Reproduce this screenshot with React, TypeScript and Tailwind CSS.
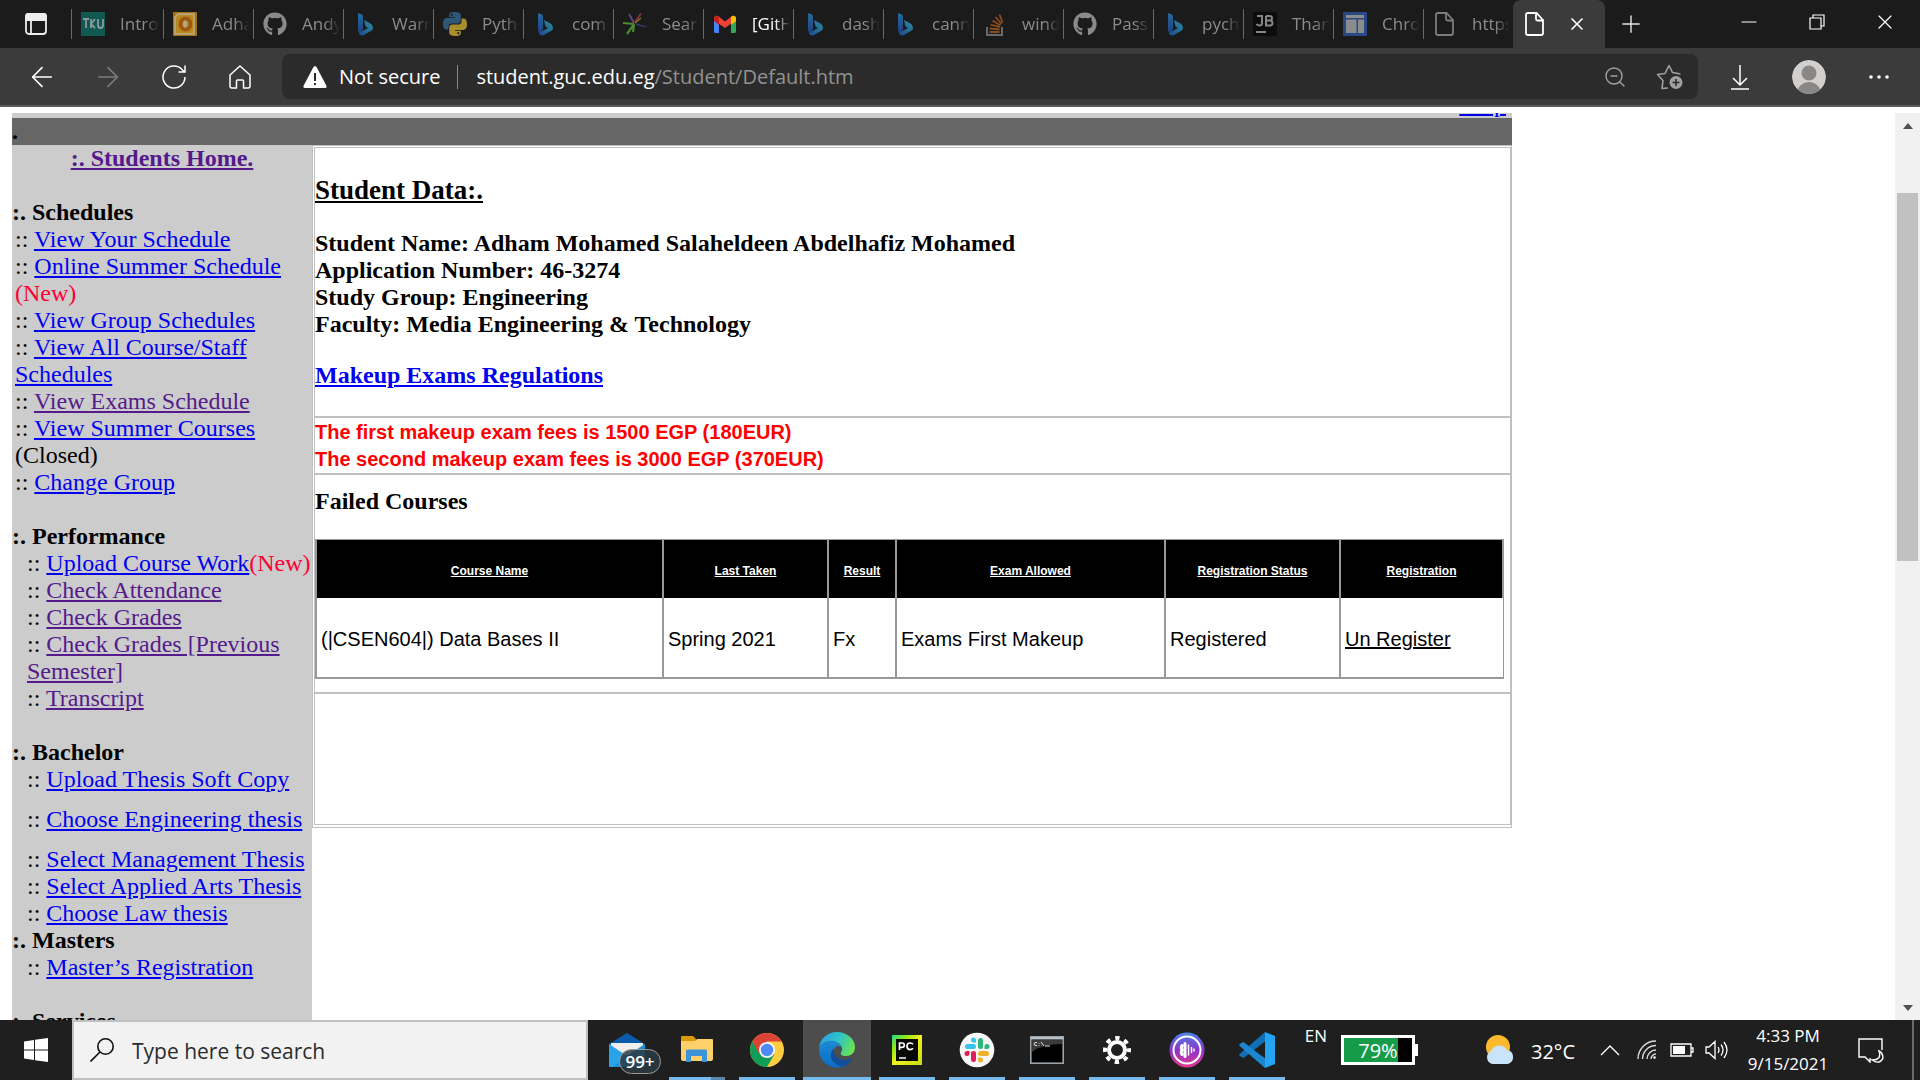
import React from "react";
import {
  ArrowLeft,
  ArrowRight,
  ZoomOut,
  Minus,
  X,
  Plus,
} from "lucide-react";
import { FaGithub } from "react-icons/fa";

/* ---------- tab icons ---------- */

const TkuIcon = () => (
  <svg viewBox="0 0 24 24" className="size-6" aria-hidden="true">
    <rect width="24" height="24" fill="#0f5952" />
    <path d="M2 7h6M5 7v9M10 7v9M10 12l4-5M10 12l4 4M17 7v6q0 3 2.500 3t2.500-3V7" fill="none" stroke="#8b9a98" strokeWidth="1.800" />
  </svg>
);

const OutlookIcon = () => (
  <svg viewBox="0 0 24 24" className="size-6" aria-hidden="true">
    <rect width="24" height="24" fill="#a5701a" />
    <path d="M2 5l3-3h16v20H2z" fill="#b98a24" stroke="#b9ac8c" strokeWidth="1.500" />
    <ellipse cx="12.500" cy="12" rx="5" ry="5.500" fill="none" stroke="#9b5a10" strokeWidth="4" />
    <ellipse cx="12" cy="12" rx="2" ry="3.500" fill="#b8a789" />
  </svg>
);

const GithubIcon = () => <FaGithub className="size-6 text-[#8a8a8a]" aria-hidden="true" />;

const BingIcon = () => (
  <svg viewBox="0 0 24 24" className="size-6" aria-hidden="true">
    <defs>
      <linearGradient id="bingA" x1="0" y1="0" x2="0" y2="1">
        <stop offset="0" stopColor="#256b9a" />
        <stop offset="1" stopColor="#1d3f86" />
      </linearGradient>
      <linearGradient id="bingB" x1="0" y1="1" x2="1" y2="0">
        <stop offset="0" stopColor="#1c4a92" />
        <stop offset="1" stopColor="#2c8d9c" />
      </linearGradient>
    </defs>
    <path d="M5 1l4 1.500q1 .5 1 1.500v13l-3 4.500Q5 20 5 18z" fill="url(#bingA)" />
    <path d="M11 8l6.500 3.500q3.500 2.500 2 6.500L10 23.500q-3 .5-4.300-2.500L15 16l-2.500-1.500z" fill="url(#bingB)" />
  </svg>
);

const PythonIcon = () => {
  const half =
    "M11.900 0C5.800 0 6.200 2.600 6.200 2.600v2.700h5.800v.8H3.900S0 5.700 0 11.800s3.400 5.800 3.400 5.800h2v-2.800s-.1-3.400 3.400-3.400h5.700s3.300.05 3.300-3.200V3.200S18.200 0 11.900 0zM8.700 1.800a1 1 0 110 2.100 1 1 0 010-2.100z";
  return (
    <svg viewBox="0 0 24 24" className="size-6" aria-hidden="true">
      <path d={half} fill="#2f5878" fillRule="evenodd" />
      <path d={half} fill="#a88f2c" fillRule="evenodd" transform="rotate(180 12 12)" />
    </svg>
  );
};

const BurstIcon = () => (
  <svg viewBox="0 0 24 24" className="size-6" aria-hidden="true" fill="none" strokeWidth="1.800">
    <path d="M11 11L6 2" stroke="#5d4a86" />
    <path d="M12 10L18 1.500" stroke="#8d3434" />
    <path d="M13 12l10 3" stroke="#333a5e" />
    <path d="M0 11l11 1M11 12L4 22M11 12l-1 8" stroke="#4c8a2d" strokeWidth="2.200" />
    <path d="M12 11l6-5" stroke="#8c7b2b" strokeWidth="1.200" />
  </svg>
);

const GmailIcon = () => (
  <svg viewBox="0 0 24 24" className="size-6" aria-hidden="true">
    <path d="M1 6l5 4v11H2.500Q1 21 1 19.500z" fill="#4285f4" />
    <path d="M18 10l5-4v13.500q0 1.500-1.500 1.500H18z" fill="#34a853" />
    <path d="M1 6q.5-3 4-2l7 5.500L19 4q3.500-1 4 2v2L12 16 1 8.500z" fill="#ea4335" />
    <path d="M18 5l1-1q3.500-1 4 2v3l-5 4z" fill="#fbbc04" />
    <path d="M1 6q.5-3 4-2l1 1v8L1 9z" fill="#c5221f" />
  </svg>
);

const StackIcon = () => (
  <svg viewBox="0 0 24 24" className="size-6" aria-hidden="true" fill="none">
    <path d="M4 15v8h15v-8" stroke="#6a6a6a" strokeWidth="2" />
    <path d="M6.500 20h10M6.800 16.500l9.800 1M7.500 12.500l9.300 2.700M9.500 8.500l8 5M12.500 5l6 7M16.500 2.500l3 8" stroke="#8a4c1e" strokeWidth="1.800" />
  </svg>
);

const JbIcon = () => (
  <svg viewBox="0 0 24 24" className="size-6" aria-hidden="true">
    <rect width="24" height="24" fill="#0c0c0c" />
    <path d="M4 4h5v7q0 2.500-2.500 2.500-2 0-3-1.500M13 4v9.500h3.500q3 0 3-2.500T16.500 8.600H13M13 4h3.500q2.500 0 2.500 2.300t-2.500 2.300M3 20h10" fill="none" stroke="#858585" strokeWidth="2" />
  </svg>
);

const LayoutIcon = () => (
  <svg viewBox="0 0 24 24" className="size-6" aria-hidden="true">
    <rect width="24" height="24" rx="1" fill="#274a85" />
    <path d="M3 3h18v3H3zM3 7.500h10.500V21H3zM15 7.500h6V21h-6z" fill="#8c8c8c" />
  </svg>
);

const PageIcon = ({ tone }: { tone: string }) => (
  <svg viewBox="0 0 24 24" className={`size-6 ${tone}`} aria-hidden="true" fill="none" stroke="currentColor" strokeWidth="1.800">
    <path d="M5 1h8.500L20 8v13q0 2-2 2H5q-2 0-2-2V3q0-2 2-2zM13 1v6q0 1.500 1.500 1.500H20" />
  </svg>
);

const tabs: { label: string; icon: React.ReactNode; bright?: boolean }[] = [
  { label: "Intro", icon: <TkuIcon /> },
  { label: "Adha", icon: <OutlookIcon /> },
  { label: "Andy", icon: <GithubIcon /> },
  { label: "Warn", icon: <BingIcon /> },
  { label: "Pyth", icon: <PythonIcon /> },
  { label: "com", icon: <BingIcon /> },
  { label: "Sear", icon: <BurstIcon /> },
  { label: "[GitH", icon: <GmailIcon />, bright: true },
  { label: "dash", icon: <BingIcon /> },
  { label: "cann", icon: <BingIcon /> },
  { label: "wind", icon: <StackIcon /> },
  { label: "Pass", icon: <GithubIcon /> },
  { label: "pych", icon: <BingIcon /> },
  { label: "Than", icon: <JbIcon /> },
  { label: "Chro", icon: <LayoutIcon /> },
  { label: "https", icon: <PageIcon tone="text-[#7c7c7c]" /> },
];

function TabStrip() {
  return (
    <div className="flex h-12 shrink-0 bg-[#1b1b1b]">
      <button aria-label="Tab actions" className="flex w-[71px] items-center justify-center">
        <svg viewBox="0 0 24 24" className="size-6" fill="none" stroke="#ededed" strokeWidth="1.800">
          <rect x="2" y="2" width="20" height="20" rx="3" />
          <path d="M2 4q0-2 2-2h16q2 0 2 2v4H2z" fill="#ededed" />
          <path d="M7 8v14" />
        </svg>
      </button>
      <div className="flex">
        {tabs.map((t, i) => (
          <button key={i} className="flex h-12 w-[90px] shrink-0 items-center first:w-[92px]">
            <span className="h-[30px] w-px bg-[#6a6a6a]" />
            <span className="ml-[9px] shrink-0">{t.icon}</span>
            <span
              className={
                "mr-[3px] ml-[15px] flex-1 overflow-hidden text-left text-[17px] whitespace-nowrap [mask-image:linear-gradient(to_right,black_60%,transparent)] " +
                (t.bright ? "text-white" : "text-[#8c8c8c]")
              }
            >
              {t.label}
            </span>
          </button>
        ))}
      </div>
      <div className="flex w-[92px] shrink-0 items-center rounded-t-lg bg-[#3b3b3b] pl-[10px]">
        <PageIcon tone="text-white" />
        <button aria-label="Close tab" className="ml-[20px] text-white">
          <X className="size-5" strokeWidth={2} />
        </button>
      </div>
      <button aria-label="New tab" className="ml-3 text-[#e6e6e6]">
        <Plus className="size-7" strokeWidth={1.200} />
      </button>
      <div className="mr-px ml-auto flex w-[204px] text-white">
        <button aria-label="Minimize" className="flex w-[68px] items-center justify-center pb-1">
          <Minus className="size-6" strokeWidth={1.200} />
        </button>
        <button aria-label="Restore" className="flex w-[68px] items-center justify-center pb-1">
          <svg viewBox="0 0 16 16" className="size-4" fill="none" stroke="white" strokeWidth="1.200">
            <path d="M1 4h11v11H1zM4 4V1h11v11h-3" />
          </svg>
        </button>
        <button aria-label="Close" className="flex w-[68px] items-center justify-center pb-1">
          <X className="size-6" strokeWidth={1.200} />
        </button>
      </div>
    </div>
  );
}

function Toolbar() {
  return (
    <div className="flex h-[59px] shrink-0 items-center border-b-2 border-[#5a5a5a] bg-[#3b3b3b] text-white">
      <button aria-label="Back" className="ml-[26px]">
        <ArrowLeft className="size-8" strokeWidth={1.200} />
      </button>
      <button aria-label="Forward" className="ml-[34px] text-[#7d7d7d]">
        <ArrowRight className="size-8" strokeWidth={1.200} />
      </button>
      <button aria-label="Refresh" className="ml-[38px]">
        <svg viewBox="0 0 24 24" className="size-6" fill="none" stroke="currentColor" strokeWidth="1.500">
          <path d="M23 12A11 11 0 1 1 20 4.500L22.500 7M23 .5V7h-6.500" />
        </svg>
      </button>
      <button aria-label="Home" className="ml-[42px]">
        <svg viewBox="0 0 24 24" className="size-6" fill="none" stroke="currentColor" strokeWidth="1.500" strokeLinejoin="round">
          <path d="M2 10L12 1l10 9v11q0 2-2 2h-4.500v-7q0-1-1-1h-5q-1 0-1 1v7H4q-2 0-2-2z" />
        </svg>
      </button>
      <div className="ml-[30px] flex h-[45px] flex-1 items-center rounded-lg bg-[#2b2b2b] pl-[21px] text-xl">
        <button className="flex items-center">
          <svg viewBox="0 0 24 24" className="size-6" fill="white">
            <path fillRule="evenodd" d="M12 1q1 0 1.800 1.500l9.500 18q1 2.500-1.300 2.500H2Q-.3 23 .7 20.500l9.500-18Q11 1 12 1zM11 8v8h2V8zM11 18v2h2v-2z" />
          </svg>
          <span className="ml-3">Not secure</span>
        </button>
        <span className="ml-[17px] h-6 w-px bg-[#8a8a8a]" />
        <div className="ml-[18px]">
          student.guc.edu.eg<span className="text-[#929292]">/Student/Default.htm</span>
        </div>
        <button aria-label="Zoom out" className="ml-auto text-[#a0a0a0]">
          <ZoomOut className="size-6" strokeWidth={1.400} />
        </button>
        <button aria-label="Add to favorites" className="mr-[14px] ml-[29px]">
          <svg viewBox="0 0 28 26" className="h-[26px] w-7" fill="none" stroke="#a0a0a0" strokeWidth="1.600" strokeLinejoin="round">
            <path d="M12 24l-6 .5 1-8-5.500-6 7.500-1L13 1.500l3.500 7 8 1.500" />
            <circle cx="20" cy="18.500" r="6.500" fill="#a0a0a0" stroke="none" />
            <path d="M20 15v7M16.500 18.500h7" stroke="#2b2b2b" />
          </svg>
        </button>
      </div>
      <button aria-label="Downloads" className="ml-[30px]">
        <svg viewBox="0 0 24 26" className="h-[26px] w-6" fill="none" stroke="currentColor" strokeWidth="1.500">
          <path d="M12 1v20M5 14l7 7 7-7M3 25h18" />
        </svg>
      </button>
      <button aria-label="Profile" className="ml-[40px]">
        <svg viewBox="0 0 34 34" className="size-[34px]">
          <clipPath id="avatar"><circle cx="17" cy="17" r="17" /></clipPath>
          <g clipPath="url(#avatar)">
            <circle cx="17" cy="17" r="17" fill="#d2d0ce" />
            <circle cx="17" cy="13" r="7.500" fill="#8a8886" />
            <circle cx="17" cy="34" r="12" fill="#8a8886" />
          </g>
        </svg>
      </button>
      <button aria-label="Settings and more" className="mr-[29px] ml-[41px]">
        <svg viewBox="0 0 24 24" className="size-6" fill="white">
          <circle cx="4" cy="12" r="1.800" /><circle cx="12" cy="12" r="1.800" /><circle cx="20" cy="12" r="1.800" />
        </svg>
      </button>
    </div>
  );
}

/* ---------- page ---------- */

function Entry({ children, visited, after }: { children: string; visited?: boolean; after?: React.ReactNode }) {
  return (
    <li>
      ::{" "}
      <a href="#" className={visited ? "text-[#551a8b] underline" : "text-[#0000ee] underline"}>
        {children}
      </a>
      {after}
    </li>
  );
}

const New = () => <span className="text-[#ff0033]">(New)</span>;

function Sidebar() {
  return (
    <nav className="w-[300px] shrink-0 bg-[#cccccc]">
      <p className="mb-[27px] text-center font-bold">
        <a href="#" className="text-[#551a8b] underline">:. Students Home.</a>
      </p>
      <h2 className="font-bold">:. Schedules</h2>
      <ul className="mb-[27px] pl-[3px]">
        <Entry>View Your Schedule</Entry>
        <Entry after={<> <New /></>}>Online Summer Schedule</Entry>
        <Entry>View Group Schedules</Entry>
        <Entry>View All Course/Staff Schedules</Entry>
        <Entry visited>View Exams Schedule</Entry>
        <Entry after=" (Closed)">View Summer Courses</Entry>
        <Entry>Change Group</Entry>
      </ul>
      <h2 className="font-bold">:. Performance</h2>
      <ul className="mb-[27px] pl-[15px]">
        <Entry after={<New />}>Upload Course Work</Entry>
        <Entry visited>Check Attendance</Entry>
        <Entry visited>Check Grades</Entry>
        <Entry visited>Check Grades [Previous Semester]</Entry>
        <Entry visited>Transcript</Entry>
      </ul>
      <h2 className="font-bold">:. Bachelor</h2>
      <ul className="pl-[15px]">
        <Entry>Upload Thesis Soft Copy</Entry>
      </ul>
      <ul className="my-[13px] pl-[15px]">
        <Entry>Choose Engineering thesis</Entry>
      </ul>
      <ul className="pl-[15px]">
        <Entry>Select Management Thesis</Entry>
        <Entry>Select Applied Arts Thesis</Entry>
        <Entry>Choose Law thesis</Entry>
      </ul>
      <h2 className="font-bold">:. Masters</h2>
      <ul className="mb-[27px] pl-[15px]">
        <Entry>Master’s Registration</Entry>
      </ul>
      <h2 className="font-bold">:. Services</h2>
    </nav>
  );
}

const columns = [
  { name: "Course Name", width: "w-[347px]" },
  { name: "Last Taken", width: "w-[165px]" },
  { name: "Result", width: "w-[68px]" },
  { name: "Exam Allowed", width: "w-[269px]" },
  { name: "Registration Status", width: "w-[175px]" },
  { name: "Registration", width: "w-[163px]" },
];

const row = ["(|CSEN604|) Data Bases II", "Spring 2021", "Fx", "Exams First Makeup", "Registered"];

function StudentPanel() {
  return (
    <main className="flex-1 self-start border border-[#c0c0c0] pt-px pb-[2px] pl-px">
      <div className="border border-[#c0c0c0]">
        <section className="border-b-2 border-[#c0c0c0] pt-[27px] pb-[27px] font-bold">
          <h1 className="mb-6 text-[27px] leading-[31px] underline">Student Data:.</h1>
          <p>Student Name: Adham Mohamed Salaheldeen Abdelhafiz Mohamed</p>
          <p>Application Number: 46-3274</p>
          <p>Study Group: Engineering</p>
          <p>Faculty: Media Engineering &amp; Technology</p>
          <p className="mt-6">
            <a href="#" className="text-[#0000ee] underline">Makeup Exams Regulations</a>
          </p>
        </section>
        <section className="border-b-2 border-[#c0c0c0] pt-px font-['Liberation_Sans',sans-serif] text-xl leading-[27px] font-bold text-[#ff0000]">
          <p>The first makeup exam fees is 1500 EGP (180EUR)</p>
          <p>The second makeup exam fees is 3000 EGP (370EUR)</p>
        </section>
        <section className="border-b-2 border-[#c0c0c0] pt-[13px] pb-[13px]">
          <h2 className="mb-6 font-bold">Failed Courses</h2>
          <table className="w-[1187px] table-fixed border-collapse border-2 border-t border-r border-[#999999] font-['Liberation_Sans',sans-serif] text-xl leading-[27px]">
            <thead>
              <tr className="h-[58px] bg-black text-xs text-white">
                {columns.map((c) => (
                  <th key={c.name} scope="col" className={`${c.width} border-x-2 border-[#999999] pt-1 font-bold`}>
                    <a href="#" className="underline">{c.name}</a>
                  </th>
                ))}
              </tr>
            </thead>
            <tbody>
              <tr className="h-20">
                {row.map((cell) => (
                  <td key={cell} className="border-x-2 border-[#999999] px-1 pt-1 whitespace-nowrap">{cell}</td>
                ))}
                <td className="border-l-2 border-[#999999] px-1 pt-1 whitespace-nowrap">
                  <a href="#" className="underline">Un Register</a>
                </td>
              </tr>
            </tbody>
          </table>
        </section>
        <section className="h-[130px]" />
      </div>
    </main>
  );
}

function Viewport() {
  return (
    <div className="flex min-h-0 flex-1 bg-white pt-[6px]">
      <div className="mr-[383px] ml-3 flex-1 overflow-hidden font-['Liberation_Serif',serif] text-2xl leading-[27px] text-black">
        <div className="flex h-[5px] items-end justify-end overflow-hidden bg-[#cccccc] pr-[6px]">
          <a href="#" className="text-[#0000ee] underline">Help</a>
        </div>
        <div className="h-[27px] bg-[#666666] font-bold">.</div>
        <div className="flex">
          <Sidebar />
          <StudentPanel />
        </div>
      </div>
      <div className="flex w-[25px] flex-col items-center bg-[#f1f1f1]">
        <svg viewBox="0 0 10 6" className="mt-[10px] h-[6px] w-[10px]"><path d="M5 0l5 6H0z" fill="#505050" /></svg>
        <div className="mt-[64px] h-[368px] w-[21px] bg-[#c1c1c1]" />
        <svg viewBox="0 0 10 6" className="mt-auto mb-[9px] h-[6px] w-[10px]"><path d="M5 6l5-6H0z" fill="#505050" /></svg>
      </div>
    </div>
  );
}

/* ---------- taskbar ---------- */

const MailIcon = () => (
  <span className="relative flex">
    <svg viewBox="0 0 36 34" className="h-[34px] w-9">
      <path d="M0 11L18 0l18 11v23H0z" fill="#0a5cab" />
      <path d="M2 10h32v12H2z" fill="#efefef" />
      <path d="M0 11l18 12L36 11v23H0z" fill="#2aa4e8" />
      <path d="M18 23L36 11v23H4z" fill="#1f8fd6" />
    </svg>
    <span className="absolute top-4 left-[10px] w-[42px] rounded-full border border-[#9a9a9a] bg-[#2b3b44]/85 text-center text-[17px] leading-[23px] font-semibold text-white">
      99+
    </span>
  </span>
);

const ExplorerIcon = () => (
  <svg viewBox="0 0 32 28" className="h-7 w-8">
    <path d="M0 1q0-1 1-1h11l3 3v4H0z" fill="#dd9a08" />
    <path d="M0 5h14l2-2h15q1 0 1 1v19q0 2-2 2H2q-2 0-2-2z" fill="#fdd06a" />
    <path d="M5 26V15q0-1.500 1.500-1.500h18q1.500 0 1.500 1.500v11h-5v-6H10v6z" fill="#3c94d8" />
  </svg>
);

const ChromeIcon = () => (
  <svg viewBox="0 0 34 34" className="size-[34px]">
    <circle cx="17" cy="17" r="17" fill="#ffcd40" />
    <path d="M17 17L2.300 8.500A17 17 0 0 0 17 34l7.400-12.700z" fill="#109d58" />
    <path d="M2.300 8.500A17 17 0 0 1 31.700 8.500H17L9.600 21.300z" fill="#dc4437" />
    <circle cx="17" cy="17" r="8" fill="#f4f4f4" />
    <circle cx="17" cy="17" r="6.200" fill="#4c8bf5" />
  </svg>
);

const EdgeIcon = () => (
  <svg viewBox="0 0 36 36" className="size-9">
    <defs>
      <linearGradient id="edgeTop" x1="0" y1=".3" x2="1" y2=".6">
        <stop offset="0" stopColor="#2da0e0" />
        <stop offset=".5" stopColor="#2fc3c9" />
        <stop offset="1" stopColor="#6be34e" />
      </linearGradient>
      <linearGradient id="edgeLeft" x1="0" y1="0" x2="0" y2="1">
        <stop offset="0" stopColor="#1a8ad6" />
        <stop offset="1" stopColor="#0c6cc4" />
      </linearGradient>
    </defs>
    <path d="M0 16C1 6 9 0 18 0c10 0 18 7 18 15 0 6-4 9-9 9-4 0-6-1.500-5-3.500 3-4 0-9-6-11-6-1.500-13 1-16 6.500z" fill="url(#edgeTop)" />
    <path d="M0 17C2 11 8 8 14 9c5 .8 8 4 8.500 7-1-1.700-3-2.500-5-1.500-5 2.500-5 11 2 17 3 2.300 5 3 7 2.500C16 39 0 33 0 17z" fill="url(#edgeLeft)" />
    <path d="M14 17c-5 6-1.500 15 9 18 4-1 8-4 10-8 .3-1-.5-1-1-.7-8 4-17 0-17-7.300 0-1 0-1.700-1-2z" fill="#114f9c" />
  </svg>
);

const PyCharmIcon = () => (
  <svg viewBox="0 0 30 30" className="size-[30px]">
    <defs>
      <linearGradient id="pyc" x1="0" y1="0" x2="1" y2="1">
        <stop offset="0" stopColor="#21d789" />
        <stop offset=".25" stopColor="#8fe81a" />
        <stop offset=".5" stopColor="#f2f01c" />
        <stop offset="1" stopColor="#c8d912" />
      </linearGradient>
    </defs>
    <rect width="30" height="30" fill="url(#pyc)" />
    <rect x="4" y="4" width="22" height="22" fill="#060806" />
    <path d="M7.500 15V8H10q2.300 0 2.300 2.200T10 12.400H7.500M21 9.300Q20 8 18 8q-3 0-3 3.300t3 3.300q2 0 3-1.300M7 23h7" fill="none" stroke="#fff" strokeWidth="1.700" />
  </svg>
);

const SlackIcon = () => (
  <svg viewBox="0 0 36 36" className="size-9">
    <circle cx="18" cy="18" r="17.300" fill="#f7f7f7" />
    <g fill="#36c5f0"><rect x="6" y="12" width="11" height="5" rx="2.500" /><path d="M12 8a2.500 2.500 0 0 1 5 0v2.500h-2.500A2.500 2.500 0 0 1 12 8z" /></g>
    <g fill="#2eb67d"><rect x="19" y="6" width="5" height="11" rx="2.500" /><path d="M28 12a2.500 2.500 0 0 1 0 5h-2.500v-2.500A2.500 2.500 0 0 1 28 12z" /></g>
    <g fill="#ecb22e"><rect x="19" y="19" width="11" height="5" rx="2.500" /><path d="M24 28a2.500 2.500 0 0 1-5 0v-2.500h2.500A2.500 2.500 0 0 1 24 28z" /></g>
    <g fill="#e01e5a"><rect x="12" y="19" width="5" height="11" rx="2.500" /><path d="M8 24a2.500 2.500 0 0 1 0-5h2.500v2.500A2.500 2.500 0 0 1 8 24z" /></g>
  </svg>
);

const TerminalIcon = () => (
  <svg viewBox="0 0 34 28" className="h-7 w-[34px]">
    <rect x=".8" y=".8" width="32.400" height="26.400" fill="#000" stroke="#9aa2aa" strokeWidth="1.600" />
    <path d="M1 1h32v2.500H1z" fill="#b8c0c8" />
    <path d="M2 4h30v4Q12 8 2 16z" fill="#3a3a3a" />
    <path d="M7 6.500q-3-.5-3 1.500t3 1.500M9 7v.8M9 9v.8M11 6l3 4M15 10h5" fill="none" stroke="#e2e2e2" />
  </svg>
);

const GearIcon = () => (
  <svg viewBox="0 0 28 28" className="size-7" stroke="#fff" fill="none">
    <circle cx="14" cy="14" r="8" strokeWidth="4" />
    <circle cx="14" cy="14" r="12" strokeWidth="4" strokeDasharray="4.400 5.025" strokeDashoffset="2.200" />
  </svg>
);

const VoiceIcon = () => (
  <svg viewBox="0 0 36 36" className="size-9">
    <defs>
      <linearGradient id="voice" x1="0" y1="0" x2="0" y2="1">
        <stop offset="0" stopColor="#4a86e8" />
        <stop offset=".5" stopColor="#8a35c9" />
        <stop offset="1" stopColor="#e8368a" />
      </linearGradient>
    </defs>
    <circle cx="18" cy="18" r="17.500" fill="url(#voice)" />
    <circle cx="18" cy="18" r="13.500" fill="none" stroke="#fff" strokeWidth="2" />
    <path d="M13 13.500q-1.500 2 0 4.500-1.500 2.500 0 4.500M16 11.500v13" stroke="#fff" strokeWidth="3" strokeLinecap="round" fill="none" />
    <path d="M19.500 13v10M22.500 15.500v5M25 17v2" stroke="#fff" strokeWidth="1.500" strokeLinecap="round" />
  </svg>
);

const CodeIcon = () => (
  <svg viewBox="0 0 36 36" className="size-9">
    <path d="M26 0l10 4v28l-10 4z" fill="#24a4f2" />
    <path d="M26 0v9.500L4.500 26 .7 24q-1-1 0-2z" fill="#0f70b7" />
    <path d="M26 36v-9.500L4.500 10 .7 12q-1 1 0 2z" fill="#1a87d0" />
  </svg>
);

const apps: { name: string; icon: React.ReactNode; state: "idle" | "open" | "active" | "stacked" }[] = [
  { name: "Mail", icon: <MailIcon />, state: "idle" },
  { name: "File Explorer", icon: <ExplorerIcon />, state: "stacked" },
  { name: "Chrome", icon: <ChromeIcon />, state: "open" },
  { name: "Edge", icon: <EdgeIcon />, state: "active" },
  { name: "PyCharm", icon: <PyCharmIcon />, state: "open" },
  { name: "Slack", icon: <SlackIcon />, state: "open" },
  { name: "Command Prompt", icon: <TerminalIcon />, state: "open" },
  { name: "Settings", icon: <GearIcon />, state: "open" },
  { name: "Voice", icon: <VoiceIcon />, state: "open" },
  { name: "Visual Studio Code", icon: <CodeIcon />, state: "open" },
];

function Taskbar() {
  return (
    <footer className="flex h-[60px] shrink-0 bg-[#1f1f1f] text-white">
      <button aria-label="Start" className="flex w-[72px] items-center justify-center">
        <svg viewBox="0 0 24 24" className="size-6" fill="white">
          <path d="M0 3.400l10-1.400v9.500H0zM11 1.800L24 0v11.500H11zM0 12.500h10V22L0 20.600zM11 12.500h13V24l-13-1.800z" />
        </svg>
      </button>
      <label className="flex w-[516px] items-center border-2 border-[#c0c0c0] bg-[#f2f2f2] pl-4">
        <svg viewBox="0 0 24 24" className="size-6 shrink-0" fill="none" stroke="#111" strokeWidth="1.600">
          <circle cx="15.500" cy="8.500" r="7.700" />
          <path d="M10 14L.5 23.500" />
        </svg>
        <span className="sr-only">Search</span>
        <input
          type="text"
          placeholder="Type here to search"
          className="ml-[18px] min-w-0 flex-1 bg-transparent pt-1 text-[21px] outline-none placeholder:text-[#2b2b2b]"
        />
      </label>
      <div className="ml-1 flex">
        {apps.map((a) => (
          <button
            key={a.name}
            aria-label={a.name}
            className={
              "mx-px flex w-[68px] flex-col items-center " + (a.state === "active" ? "bg-[#4d4d4d]" : "")
            }
          >
            <span className="flex h-[57px] items-center pt-[3px]">{a.icon}</span>
            {a.state === "open" && <span className="h-[3px] w-14 bg-[#76b9ed]" />}
            {a.state === "active" && <span className="h-[3px] w-full bg-[#76b9ed]" />}
            {a.state === "stacked" && (
              <span className="flex h-[3px] w-14">
                <span className="h-full w-[42px] bg-[#76b9ed]" />
                <span className="h-full w-[14px] bg-[#5a87ab]" />
              </span>
            )}
          </button>
        ))}
      </div>
      <div className="ml-auto flex items-center">
        <span className="mr-[14px] self-start pt-[3px] text-[17px]">EN</span>
        <div className="flex items-center">
          <div className="flex h-[30px] w-[74px] items-center justify-center border-[3px] border-white bg-[linear-gradient(to_right,#169c48_80%,#000_80%)] pt-[2px] text-xl">
            79%
          </div>
          <div className="h-3 w-[3px] bg-white" />
        </div>
        <svg viewBox="0 0 32 32" className="ml-[66px] size-8">
          <circle cx="14" cy="13" r="12" fill="#fdb92e" />
          <path d="M8 30a7 7 0 0 1-1-13 9 9 0 0 1 16-1 7.200 7.200 0 0 1 1 14z" fill="#c9e4f8" />
        </svg>
        <span className="ml-[15px] pt-1 text-xl">32°C</span>
        <button aria-label="Show hidden icons" className="ml-[25px]">
          <svg viewBox="0 0 20 12" className="h-3 w-5" fill="none" stroke="white" strokeWidth="1.400"><path d="M1 11l9-9 9 9" /></svg>
        </button>
        <svg viewBox="0 0 20 20" className="ml-[17px] size-5" fill="none" stroke="#d8d8d8" strokeWidth="1.400">
          <path d="M1 19A18 18 0 0 1 19 1M5.500 19A13.500 13.500 0 0 1 19 5.500M10 19a9 9 0 0 1 9-9" />
          <path d="M14 19a5 5 0 0 1 5-5" />
          <circle cx="17.500" cy="17.500" r="1.300" fill="#fff" stroke="none" />
        </svg>
        <svg viewBox="0 0 24 14" className="ml-[13px] h-[14px] w-6" fill="none" stroke="white" strokeWidth="1.300">
          <path d="M1 1h20v12H1zM21 5h2v4h-2" /><path d="M3 3h12v8H3z" fill="white" stroke="none" />
        </svg>
        <svg viewBox="0 0 24 20" className="ml-[11px] h-5 w-6" fill="none" stroke="white" strokeWidth="1.300">
          <path d="M1 7h3l6-5.500v17L4 13H1zM13 7q2 3 0 6M16 4.500q4 5.500 0 11M19 2q6 8 0 16" />
        </svg>
        <div className="ml-[15px] w-[88px] text-center text-[17px] leading-7">
          <p>4:33 PM</p>
          <p>9/15/2021</p>
        </div>
        <button aria-label="Notifications" className="ml-[26px]">
          <svg viewBox="0 0 26 26" className="size-[26px]" fill="none" stroke="white" strokeWidth="1.400">
            <path d="M24 13V2H1v18h6l5 5v-4" />
            <path d="M21 14q3 9-7 9 8 5 11-2 0-5-4-7z" />
          </svg>
        </button>
        <span className="mr-[6px] ml-7 h-[60px] w-[2px] bg-[#6a6a6a]" />
      </div>
    </footer>
  );
}

export default function App() {
  return (
    <div className="flex h-screen flex-col overflow-hidden font-['Open_Sans',sans-serif]">
      <TabStrip />
      <Toolbar />
      <Viewport />
      <Taskbar />
    </div>
  );
}
